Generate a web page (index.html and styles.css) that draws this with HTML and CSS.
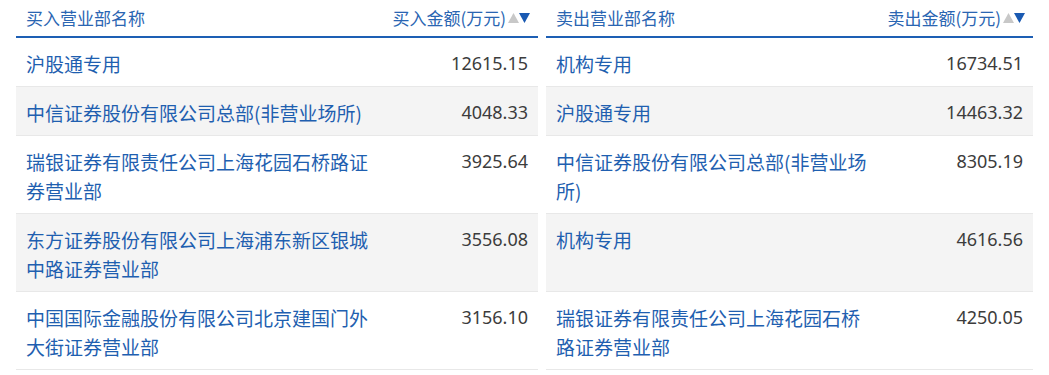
FILE: index.html
```html
<!DOCTYPE html>
<html lang="zh-CN">
<head>
<meta charset="utf-8">
<link rel="stylesheet" href="styles.css">
</head>
<body>
<div class="board">
  <div class="row head">
    <div class="half left">
      <div class="name">买入营业部名称</div>
      <div class="amt">买入金额(万元)<span class="sort"><svg width="11" height="10" viewBox="0 0 11 10"><path d="M5.5 0L11 10H0Z" fill="#c8c8c8"/></svg><svg width="11" height="10" viewBox="0 0 11 10"><path d="M0 0H11L5.5 10Z" fill="#1a5ab2"/></svg></span></div>
    </div>
    <div class="half right">
      <div class="name">卖出营业部名称</div>
      <div class="amt">卖出金额(万元)<span class="sort"><svg width="11" height="10" viewBox="0 0 11 10"><path d="M5.5 0L11 10H0Z" fill="#c8c8c8"/></svg><svg width="11" height="10" viewBox="0 0 11 10"><path d="M0 0H11L5.5 10Z" fill="#1a5ab2"/></svg></span></div>
    </div>
  </div>

  <div class="row">
    <div class="half left"><div class="name">沪股通专用</div><div class="amt">12615.15</div></div>
    <div class="half right"><div class="name">机构专用</div><div class="amt">16734.51</div></div>
  </div>
  <div class="row alt">
    <div class="half left"><div class="name">中信证券股份有限公司总部(非营业场所)</div><div class="amt">4048.33</div></div>
    <div class="half right"><div class="name">沪股通专用</div><div class="amt">14463.32</div></div>
  </div>
  <div class="row">
    <div class="half left"><div class="name">瑞银证券有限责任公司上海花园石桥路证券营业部</div><div class="amt">3925.64</div></div>
    <div class="half right"><div class="name">中信证券股份有限公司总部(非营业场所)</div><div class="amt">8305.19</div></div>
  </div>
  <div class="row alt">
    <div class="half left"><div class="name">东方证券股份有限公司上海浦东新区银城中路证券营业部</div><div class="amt">3556.08</div></div>
    <div class="half right"><div class="name">机构专用</div><div class="amt">4616.56</div></div>
  </div>
  <div class="row">
    <div class="half left"><div class="name">中国国际金融股份有限公司北京建国门外大街证券营业部</div><div class="amt">3156.10</div></div>
    <div class="half right"><div class="name">瑞银证券有限责任公司上海花园石桥路证券营业部</div><div class="amt">4250.05</div></div>
  </div>
</div>
</body>
</html>
```
FILE: styles.css
```css
html, body {
  margin: 0;
  padding: 0;
  background: #ffffff;
}
body {
  font-family: "Noto Sans", "Noto Sans CJK SC", sans-serif;
  color: #333333;
}
.board {
  padding: 0 16px;
  display: flex;
  flex-direction: column;
}
.row {
  display: flex;
  gap: 8px;
}
.half {
  display: flex;
  border-bottom: 1px solid #e8e8e8;
}
.left { width: 522px; }
.right { width: 487px; }
.row.alt .half { background: #f4f4f4; }
.name {
  box-sizing: border-box;
  padding: 11px 10px 8px 10px;
  font-size: 19px;
  line-height: 29px;
  color: #1f5fb0;
  font-family: "Noto Sans CJK SC", sans-serif;
}
.left .name { width: 372px; }
.right .name { width: 336px; }
.amt {
  flex: 1;
  box-sizing: border-box;
  padding: 11px 10px 8px 0;
  text-align: right;
  font-size: 18px;
  line-height: 29px;
  color: #3c3c3c;
}
.head .half {
  border-bottom: 2px solid #1d5fb4;
  height: 38px;
  box-sizing: border-box;
  align-items: center;
}
.head .name, .head .amt {
  padding: 0 10px;
  font-size: 17px;
  line-height: 24px;
  color: #2a65b2;
  font-family: "Noto Sans CJK SC", sans-serif;
  white-space: nowrap;
}
.head .name { width: auto; flex: 1; }
.head .amt {
  flex: none;
  padding-right: 8px;
  display: flex;
  justify-content: flex-end;
  align-items: center;
}
.sort {
  display: inline-flex;
  align-items: center;
  margin-left: 2px;
}
.sort svg { display: block; }
```
